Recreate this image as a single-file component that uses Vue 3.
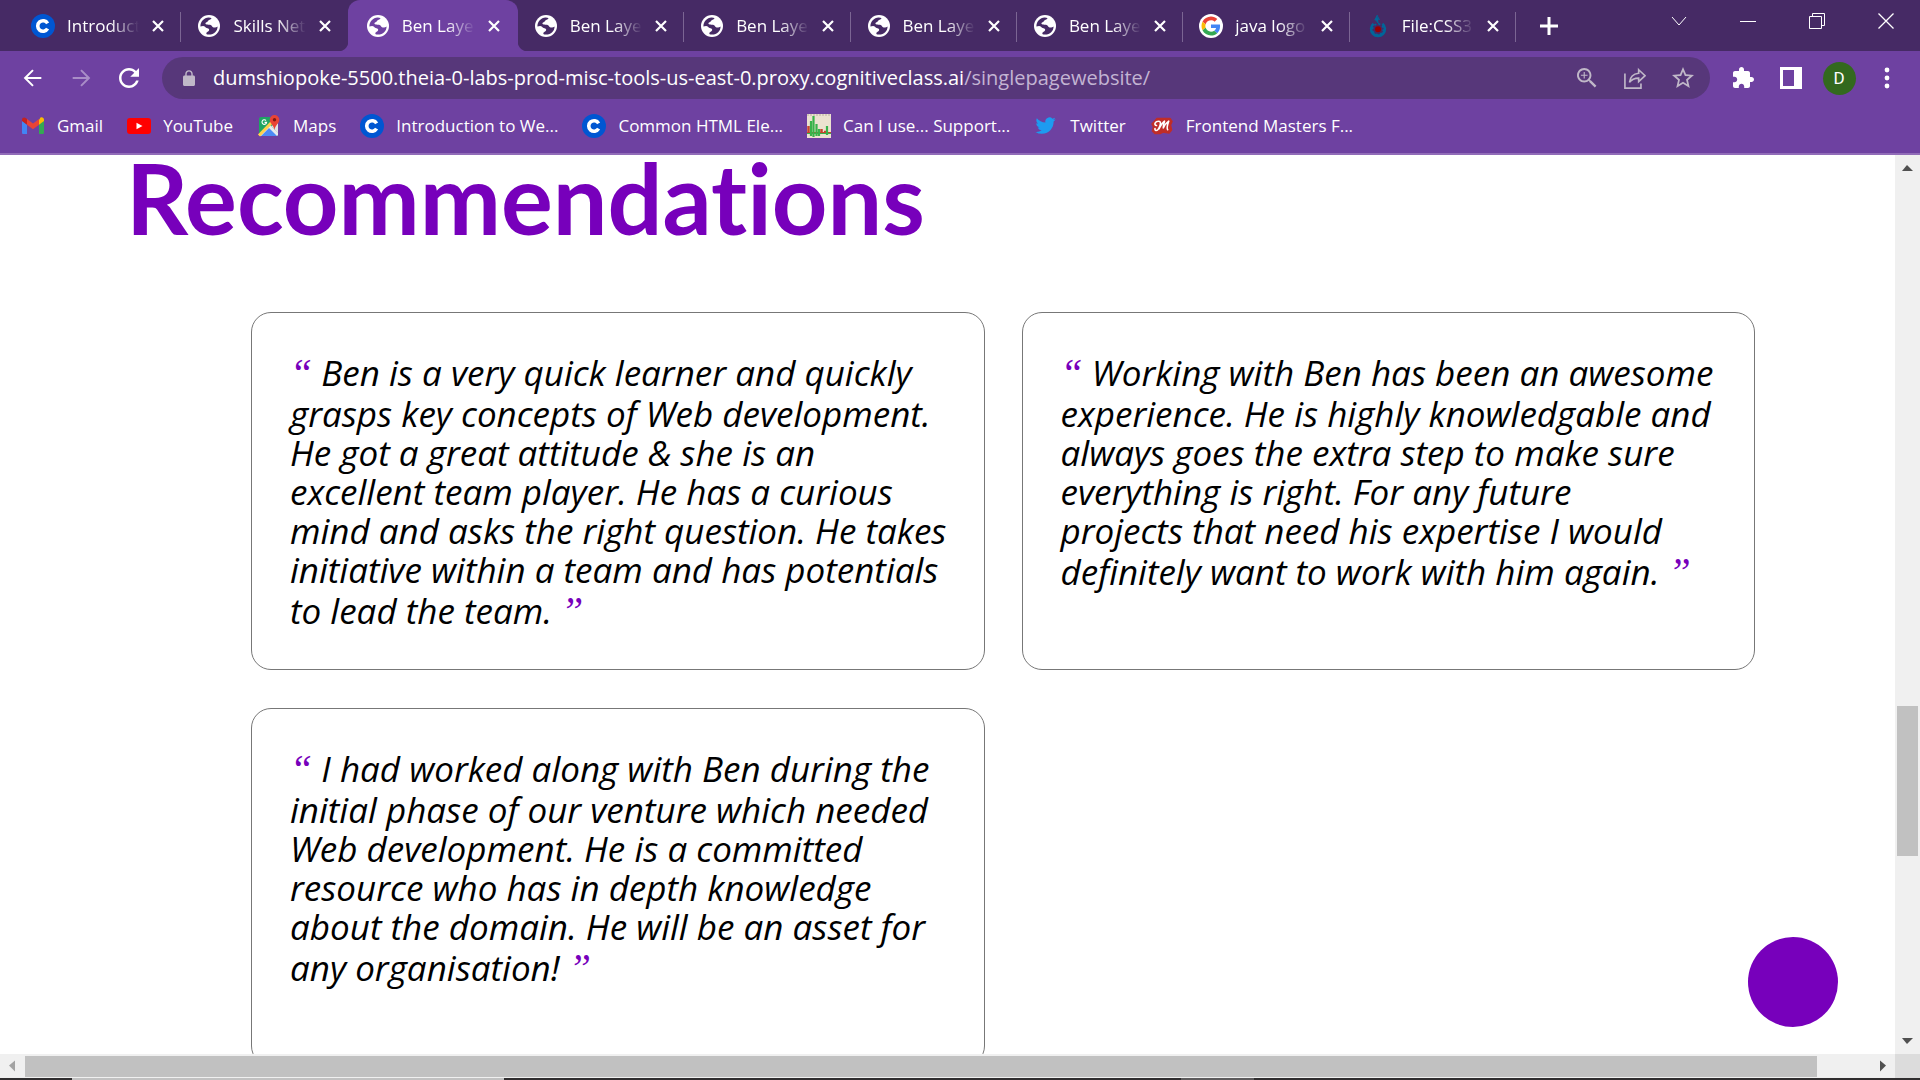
<script setup>
import { ref } from 'vue'

const tabs = [
  { title: 'Introduction', icon: 'coursera' },
  { title: 'Skills Network', icon: 'globe' },
  { title: 'Ben Layer', icon: 'globe', active: true },
  { title: 'Ben Layer', icon: 'globe' },
  { title: 'Ben Layer', icon: 'globe' },
  { title: 'Ben Layer', icon: 'globe' },
  { title: 'Ben Layer', icon: 'globe' },
  { title: 'java logo -', icon: 'google' },
  { title: 'File:CSS3 l', icon: 'commons' },
]

const bookmarks = [
  { label: 'Gmail', icon: 'gmail' },
  { label: 'YouTube', icon: 'youtube' },
  { label: 'Maps', icon: 'maps' },
  { label: 'Introduction to We...', icon: 'coursera' },
  { label: 'Common HTML Ele...', icon: 'coursera' },
  { label: 'Can I use... Support...', icon: 'caniuse' },
  { label: 'Twitter', icon: 'twitter' },
  { label: 'Frontend Masters F...', icon: 'masters' },
]

const windowControls = ['chevron', 'minimize', 'restore', 'close']

const recommendations = ref([
  `Ben is a very quick learner and quickly
grasps key concepts of Web development.
He got a great attitude & she is an
excellent team player. He has a curious
mind and asks the right question. He takes
initiative within a team and has potentials
to lead the team.`,
  `Working with Ben has been an awesome
experience. He is highly knowledgable and
always goes the extra step to make sure
everything is right. For any future
projects that need his expertise I would
definitely want to work with him again.`,
  `I had worked along with Ben during the
initial phase of our venture which needed
Web development. He is a committed
resource who has in depth knowledge
about the domain. He will be an asset for
any organisation!`,
])
</script>

<template>
  <div class="window">
    <svg class="sprite" aria-hidden="true">
      <symbol id="coursera" viewBox="0 0 24 24">
        <circle cx="12" cy="12" r="12" fill="#0056d2" />
        <path d="M16.6 9.3a5.3 5.3 0 1 0 0 5.4" fill="none" stroke="#fff" stroke-width="3.6" />
      </symbol>
      <symbol id="globe" viewBox="0 0 24 24">
        <circle cx="12" cy="12" r="11" fill="#fff" />
        <path class="land" d="M3.4 12.4C3.4 7.6 7 3.7 11.6 3.4C13 3.4 14 3.7 14.6 4.2C13.6 6 11.6 5.6 11 7C10.6 8.2 8.4 8 8.4 9.6C8.4 11 12.4 10.6 13.6 11C15.2 11.6 14.8 13.2 16.6 13.4C18.4 13.6 19.4 13 20.6 12.4C20.6 16.8 17 20.6 12.2 20.6C10.8 20.6 9.8 20.3 9.4 20C9 17.6 12 17.8 12.2 16C12.2 14 9 14.4 8 12.8C7 11.4 5 12 3.4 12.4Z" />
      </symbol>
      <symbol id="google" viewBox="0 0 48 48">
        <circle cx="24" cy="24" r="24" fill="#fff" />
        <g transform="translate(5 5) scale(.79)">
          <path fill="#ea4335" d="M24 9.5c3.54 0 6.71 1.22 9.21 3.6l6.85-6.85C35.9 2.38 30.47 0 24 0 14.62 0 6.51 5.38 2.56 13.22l7.98 6.19C12.43 13.72 17.74 9.5 24 9.5z" />
          <path fill="#4285f4" d="M46.98 24.55c0-1.57-.15-3.09-.38-4.55H24v9.02h12.94c-.58 2.96-2.26 5.48-4.78 7.18l7.73 6c4.51-4.18 7.09-10.36 7.09-17.65z" />
          <path fill="#fbbc05" d="M10.53 28.59c-.48-1.45-.76-2.99-.76-4.59s.27-3.14.76-4.59l-7.98-6.19C.92 16.46 0 20.12 0 24c0 3.88.92 7.54 2.56 10.78l7.97-6.19z" />
          <path fill="#34a853" d="M24 48c6.48 0 11.93-2.13 15.89-5.81l-7.73-6c-2.15 1.45-4.92 2.3-8.16 2.3-6.26 0-11.57-4.22-13.47-9.91l-7.98 6.19C6.51 42.62 14.62 48 24 48z" />
        </g>
      </symbol>
      <symbol id="commons" viewBox="0 0 24 24">
        <path d="M11.4 1L8.8 6h1.9c0 2 1 2.6 2 3.6" fill="#069" stroke="#069" stroke-width="1" />
        <path d="M11.4 1L14 6h-1.6z" fill="#069" />
        <path d="M7.6 9.7a6.9 6.9 0 1 0 8.8 0" fill="none" stroke="#069" stroke-width="2.6" />
        <circle cx="12" cy="15.3" r="5.4" fill="none" stroke="#069" stroke-width="1.6" stroke-dasharray="2 2.2" />
        <circle cx="12" cy="15.3" r="3" fill="#900" />
      </symbol>
      <symbol id="gmail" viewBox="0 0 24 24">
        <path fill="#4285f4" d="M1 6.5v12.2c0 .8.6 1.4 1.4 1.4H6v-9.6z" />
        <path fill="#34a853" d="M18 20.1h3.6c.8 0 1.4-.6 1.4-1.4V6.5l-5 4z" />
        <path fill="#fbbc04" d="M18 6v4.8l5-3.8V5.6c0-2-2.2-3-3.7-1.9z" />
        <path fill="#ea4335" d="M6 10.8V5l6 4.6 6-4.6v5.8l-6 4.5z" />
        <path fill="#c5221f" d="M1 5.6V7l5 3.8V5L4.7 3.9C3.2 2.7 1 3.7 1 5.6z" />
      </symbol>
      <symbol id="youtube" viewBox="0 0 24 24">
        <rect x="0" y="4" width="24" height="16" rx="3" fill="#f00" />
        <path d="M9.5 8.7v6.6l6-3.3z" fill="#fff" />
      </symbol>
      <symbol id="maps" viewBox="0 0 24 24">
        <rect x="2" y="3" width="19" height="19" rx="2" fill="#1fa463" />
        <path d="M2 22L13 11l8 8v1.5a1.5 1.5 0 0 1-1.5 1.5z" fill="#e8eaed" />
        <path d="M4 22l8-8 8 8z" fill="#4c8bf5" />
        <path d="M2 21.5L17 6" stroke="#ffd04b" stroke-width="3" />
        <path d="M14 12l7 7.5V9z" fill="#e0e3e6" />
        <path d="M9 6.5a2.3 2.3 0 1 0 .6 1.9H7.5" fill="none" stroke="#fff" stroke-width="1.1" />
        <path d="M17.5 1a4.8 4.8 0 0 0-4.8 4.8c0 3.6 4 5.2 4.8 10.2.8-5 4.8-6.6 4.8-10.2A4.8 4.8 0 0 0 17.5 1z" fill="#ea4335" />
        <circle cx="17.5" cy="5.8" r="1.7" fill="#7d1a12" />
      </symbol>
      <symbol id="caniuse" viewBox="0 0 24 24">
        <rect width="24" height="24" fill="#ece2d0" />
        <path d="M0 1h24" stroke="#b9b09f" stroke-dasharray="2 1" />
        <path d="M1.5 12v7M14.5 15v4M17 18h2" stroke="#c8432c" stroke-width="2.5" />
        <path d="M0 18.5h24" stroke="#c8432c" />
        <path d="M4 7v15M6.5 2v21M9.5 10v12M12 15v7M20 12v9" stroke="#37b34a" stroke-width="2.2" />
        <path d="M0 19.5h24" stroke="#37b34a" />
      </symbol>
      <symbol id="twitter" viewBox="0 0 24 24">
        <path transform="translate(1.5 1.5) scale(.84)" fill="#1d9bf0" d="M23.953 4.57a10 10 0 01-2.825.775 4.958 4.958 0 002.163-2.723c-.951.555-2.005.959-3.127 1.184a4.92 4.92 0 00-8.384 4.482C7.69 8.095 4.067 6.13 1.64 3.162a4.822 4.822 0 00-.666 2.475c0 1.71.87 3.213 2.188 4.096a4.904 4.904 0 01-2.228-.616v.06a4.923 4.923 0 003.946 4.827 4.996 4.996 0 01-2.212.085 4.936 4.936 0 004.604 3.417 9.867 9.867 0 01-6.102 2.105c-.39 0-.779-.023-1.17-.067a13.995 13.995 0 007.557 2.209c9.053 0 13.998-7.496 13.998-13.985 0-.21 0-.42-.015-.63A9.935 9.935 0 0024 4.59z" />
      </symbol>
      <symbol id="masters" viewBox="0 0 24 24">
        <path d="M7 4.500h13l2 3-1.500 3.500 1 5-2.500 3-6-1-3 1.500H5L2.500 17l1-4-1.500-3z" fill="#c02d28" stroke="#c02d28" stroke-width="1.500" stroke-linejoin="round" />
        <path d="M6.500 11.500C3.500 11 5 7 9 7.200c2.500.3 1.500 4.300-.5 7.600-1.500 2.500-4 2-3.500-.3M9 15c1.500-3 3.500-6.300 5.500-7.800-1 3-1.200 4.800-1.200 6.800 1.200-2.800 3.200-5.500 5.400-6.800-1 3-2.400 7-1 8.500" fill="none" stroke="#fff" stroke-width="1.600" stroke-linecap="round" stroke-linejoin="round" />
      </symbol>
      <symbol id="back" viewBox="0 0 24 24">
        <path d="M22 12H3M12 2.5L2.5 12l9.5 9.5" fill="none" stroke="currentColor" stroke-width="2.4" />
      </symbol>
      <symbol id="forward" viewBox="0 0 24 24">
        <path d="M2 12h19M12 2.5l9.5 9.5-9.5 9.5" fill="none" stroke="currentColor" stroke-width="2.4" />
      </symbol>
      <symbol id="reload" viewBox="4 4 16 16">
        <path fill="currentColor" d="M17.65 6.35C16.2 4.9 14.21 4 12 4c-4.42 0-7.99 3.58-7.99 8s3.57 8 7.99 8c3.73 0 6.84-2.55 7.73-6h-2.08c-.82 2.33-3.04 4-5.65 4-3.31 0-6-2.69-6-6s2.69-6 6-6c1.66 0 3.14.69 4.22 1.78L13 11h7V4l-2.35 2.35z" />
      </symbol>
      <symbol id="lock" viewBox="4 1 16 21">
        <path fill="currentColor" d="M18 8h-1V6c0-2.76-2.24-5-5-5S7 3.24 7 6v2H6c-1.1 0-2 .9-2 2v10c0 1.1.9 2 2 2h12c1.1 0 2-.9 2-2V10c0-1.1-.9-2-2-2zM8.9 8V6c0-1.71 1.39-3.1 3.1-3.1s3.1 1.39 3.1 3.1v2z" />
      </symbol>
      <symbol id="zoom" viewBox="3 3 18 18">
        <path fill="currentColor" d="M15.5 14h-.79l-.28-.27C15.41 12.59 16 11.11 16 9.5 16 5.91 13.09 3 9.5 3S3 5.91 3 9.5 5.91 16 9.5 16c1.61 0 3.09-.59 4.23-1.57l.27.28v.79l5 4.99L20.49 19l-4.99-5zm-6 .3A4.8 4.8 0 1 1 9.5 4.7a4.8 4.8 0 0 1 0 9.6zM12.5 10H10v2.5H9V10H6.5V9H9V6.5h1V9h2.5z" />
      </symbol>
      <symbol id="share" viewBox="0 0 24 24">
        <path d="M1 7v16h17.5v-5" fill="none" stroke="currentColor" stroke-width="1.8" />
        <path d="M16 3l7 6.5-7 6.5v-3.8c-4.5 0-7.5 1-10 4.6.6-5.6 4-9.4 10-10z" fill="none" stroke="currentColor" stroke-width="1.8" />
      </symbol>
      <symbol id="star" viewBox="2 2 20 20">
        <path fill="currentColor" d="M22 9.24l-7.19-.62L12 2 9.19 8.63 2 9.24l5.46 4.73L5.82 21 12 17.27 18.18 21l-1.63-7.03L22 9.24zM12 15.4l-3.76 2.27 1-4.28-3.32-2.88 4.38-.38L12 6.1l1.71 4.04 4.38.38-3.32 2.88 1 4.28L12 15.4z" />
      </symbol>
      <symbol id="extension" viewBox="1 1 22 22">
        <path fill="currentColor" d="M20.5 11H19V7c0-1.1-.9-2-2-2h-4V3.5C13 2.12 11.88 1 10.5 1S8 2.12 8 3.5V5H4c-1.1 0-1.99.9-1.99 2v3.8H3.5c1.49 0 2.7 1.21 2.7 2.7s-1.21 2.7-2.7 2.7H2V20c0 1.1.9 2 2 2h3.8v-1.5c0-1.49 1.21-2.7 2.7-2.7 1.49 0 2.7 1.21 2.7 2.7V22H17c1.1 0 2-.9 2-2v-4h1.5c1.38 0 2.5-1.12 2.5-2.5S21.88 11 20.5 11z" />
      </symbol>
      <symbol id="panel" viewBox="0 0 22 22">
        <path fill="currentColor" fill-rule="evenodd" d="M0 0h22v22H0zM3 3v16h11V3z" />
      </symbol>
      <symbol id="dots" viewBox="0 0 22 22">
        <g fill="currentColor"><circle cx="11" cy="3" r="2.4" /><circle cx="11" cy="11" r="2.4" /><circle cx="11" cy="19" r="2.4" /></g>
      </symbol>
      <symbol id="x" viewBox="0 0 12 12">
        <path d="M1 1l10 10M11 1L1 11" stroke="currentColor" stroke-width="2.2" />
      </symbol>
      <symbol id="plus" viewBox="0 0 18 18">
        <path d="M9 0v18M0 9h18" stroke="currentColor" stroke-width="3" />
      </symbol>
      <symbol id="chevron" viewBox="0 0 16 16">
        <path d="M1 4l7 8 7-8" fill="none" stroke="currentColor" />
      </symbol>
      <symbol id="minimize" viewBox="0 0 16 16">
        <path d="M0 8.5h16" stroke="currentColor" />
      </symbol>
      <symbol id="restore" viewBox="0 0 16 16">
        <path d="M.5 3.5h12v12H.5zM3.5 3.5V.5h12v12h-3" fill="none" stroke="currentColor" />
      </symbol>
      <symbol id="close" viewBox="0 0 16 16">
        <path d="M.5.5l15 15M15.5.5l-15 15" stroke="currentColor" stroke-width="1.3" />
      </symbol>
    </svg>

    <header class="chrome">
      <div class="tab-strip">
        <ul class="tabs">
          <li v-for="(tab, i) in tabs" :key="i" class="tab" :class="{ active: tab.active, divided: i !== 1 && !tab.active }">
            <svg class="favicon"><use :href="'#' + tab.icon" /></svg>
            <span class="tab-title">{{ tab.title }}</span>
            <button class="icon-button tab-close" aria-label="Close tab"><svg><use href="#x" /></svg></button>
          </li>
        </ul>
        <button class="icon-button new-tab" aria-label="New tab"><svg><use href="#plus" /></svg></button>
        <div class="window-controls">
          <button v-for="name in windowControls" :key="name" class="icon-button control" :aria-label="name">
            <svg><use :href="'#' + name" /></svg>
          </button>
        </div>
      </div>

      <div class="toolbar">
        <nav class="history">
          <button class="icon-button tool" aria-label="Back"><svg><use href="#back" /></svg></button>
          <button class="icon-button tool" aria-label="Forward" disabled><svg><use href="#forward" /></svg></button>
          <button class="icon-button tool" aria-label="Reload"><svg><use href="#reload" /></svg></button>
        </nav>
        <div class="omnibox">
          <svg class="lock"><use href="#lock" /></svg>
          <span class="url">dumshiopoke-5500.theia-0-labs-prod-misc-tools-us-east-0.proxy.cognitiveclass.ai<span class="path">/singlepagewebsite/</span></span>
          <button class="icon-button tool" aria-label="Zoom"><svg><use href="#zoom" /></svg></button>
          <button class="icon-button tool" aria-label="Share"><svg class="large"><use href="#share" /></svg></button>
          <button class="icon-button tool" aria-label="Bookmark this page"><svg class="large"><use href="#star" /></svg></button>
        </div>
        <div class="actions">
          <button class="icon-button tool" aria-label="Extensions"><svg class="large"><use href="#extension" /></svg></button>
          <button class="icon-button tool" aria-label="Side panel"><svg class="large"><use href="#panel" /></svg></button>
          <button class="icon-button tool" aria-label="Profile"><span class="avatar">D</span></button>
          <button class="icon-button tool" aria-label="Menu"><svg class="large"><use href="#dots" /></svg></button>
        </div>
      </div>

      <nav class="bookmarks">
        <a v-for="item in bookmarks" :key="item.label" class="bookmark" href="#">
          <svg class="favicon"><use :href="'#' + item.icon" /></svg>
          <span>{{ item.label }}</span>
        </a>
      </nav>
    </header>

    <div class="viewport">
      <main class="page">
        <h1>Recommendations</h1>
        <div class="cards">
          <blockquote v-for="(text, i) in recommendations" :key="i" class="card"><span class="quote">“</span> {{ text }} <span class="quote">”</span></blockquote>
        </div>
        <a class="to-top" href="#" aria-label="Back to top"></a>
      </main>
      <div class="scrollbar vertical">
        <span class="arrow up"></span>
        <div class="track"><div class="thumb"></div></div>
        <span class="arrow down"></span>
      </div>
    </div>

    <div class="scroll-row">
      <div class="scrollbar horizontal">
        <span class="arrow left"></span>
        <div class="track"><div class="thumb"></div></div>
        <span class="arrow right"></span>
      </div>
      <div class="corner"></div>
    </div>
    <div class="taskbar"><span class="lit"></span><span class="dim"></span></div>
  </div>
</template>

<style>
body {
  margin: 0;
}
</style>

<style scoped>
.window {
  display: flex;
  flex-direction: column;
  height: 100vh;
  overflow: hidden;
  background: #fff;
  font-family: "Open Sans", "Noto Sans", sans-serif;
}
.sprite {
  position: absolute;
  width: 0;
  height: 0;
}
.land {
  fill: var(--bar);
}
.chrome {
  --bar: #462a65;
  flex: none;
  color: #fff;
  background: #6e41a1;
  border-bottom: 2px solid #916cb8;
}
.icon-button {
  display: flex;
  flex: none;
  align-items: center;
  justify-content: center;
  padding: 0;
  border: 0;
  background: none;
  color: inherit;
}
.favicon {
  flex: none;
  width: 24px;
  height: 24px;
}

.tab-strip {
  display: flex;
  height: 51px;
  background: var(--bar);
}
.tabs {
  display: flex;
  flex: 1;
  min-width: 0;
  margin: 0;
  padding: 0 0 0 15px;
  list-style: none;
}
.tab {
  position: relative;
  display: flex;
  flex: 1 1 0;
  align-items: center;
  box-sizing: border-box;
  min-width: 0;
  padding: 0 17px 0 16px;
}
.tab.divided::after {
  content: "";
  position: absolute;
  top: 12px;
  right: 0;
  width: 1px;
  height: 30px;
  background: #7b6593;
}
.tab.active {
  --bar: #6e41a1;
  flex: 0 0 170px;
  padding: 0 18px;
  background: var(--bar);
  border-radius: 12px 12px 0 0;
}
.tab.active::before,
.tab.active::after {
  content: "";
  position: absolute;
  bottom: 0;
  width: 10px;
  height: 10px;
}
.tab.active::before {
  right: 100%;
  background: radial-gradient(circle at 0 0, transparent 10px, #6e41a1 11px);
}
.tab.active::after {
  left: 100%;
  background: radial-gradient(circle at 100% 0, transparent 10px, #6e41a1 11px);
}
.tab-title {
  flex: 1;
  min-width: 0;
  margin: 0 13px 0 12px;
  overflow: hidden;
  font-size: 17px;
  line-height: 24px;
  white-space: nowrap;
  mask-image: linear-gradient(to right, #000 60%, transparent);
}
.tab-close svg {
  width: 12px;
  height: 12px;
}
.new-tab {
  width: 66px;
}
.new-tab svg {
  width: 18px;
  height: 18px;
}
.window-controls {
  display: flex;
  padding-left: 62px;
}
.control {
  width: 69px;
  height: 42px;
}
.control svg {
  width: 16px;
  height: 16px;
}

.toolbar {
  display: flex;
  align-items: center;
  height: 54px;
  padding: 0 9px;
}
.history,
.actions {
  display: flex;
}
.history {
  padding-right: 9px;
}
.actions {
  padding-left: 9px;
}
.tool {
  width: 48px;
  height: 42px;
}
.tool svg {
  width: 20px;
  height: 20px;
}
.tool svg.large {
  width: 22px;
  height: 22px;
}
.tool:disabled {
  color: #a98dc7;
}
.omnibox {
  display: flex;
  flex: 1;
  align-items: center;
  height: 42px;
  padding: 0 3px 0 21px;
  border-radius: 21px;
  background: #57377a;
  color: #c0b8c8;
}
.lock {
  flex: none;
  width: 12px;
  height: 18px;
}
.url {
  flex: 1;
  min-width: 0;
  margin-left: 18px;
  overflow: hidden;
  color: #fff;
  font-size: 20px;
  line-height: 28px;
  white-space: nowrap;
}
.path {
  color: #c3b4d3;
}
.avatar {
  width: 33px;
  height: 33px;
  border-radius: 50%;
  background: #33691e;
  font-family: Roboto, sans-serif;
  font-size: 17px;
  line-height: 33px;
}

.bookmarks {
  display: flex;
  gap: 24px;
  height: 42px;
  padding: 0 21px 6px;
}
.bookmark {
  display: flex;
  gap: 12px;
  align-items: center;
  color: #fff;
  font-size: 17px;
  line-height: 24px;
  text-decoration: none;
  white-space: nowrap;
}

.viewport {
  display: flex;
  flex: 1;
  min-height: 0;
}
.page {
  position: relative;
  flex: 1;
  min-width: 0;
  overflow: hidden;
}
h1 {
  margin: 0 0 71px 126px;
  color: #7700bb;
  font-family: Lato, "Open Sans", sans-serif;
  font-size: 97px;
  font-variant-ligatures: none;
  font-weight: 700;
  line-height: 86px;
}
.cards {
  display: grid;
  grid-template-columns: 1fr 1fr;
  gap: 38px 37px;
  margin: 0 140px 0 251px;
}
.card {
  box-sizing: border-box;
  min-height: 358px;
  margin: 0;
  padding: 38px 0 36px 38px;
  border: 1px solid #777;
  border-radius: 20px;
  color: #000;
  font-size: 35px;
  font-style: italic;
  line-height: 39px;
  white-space: pre;
}
.quote {
  color: #7700bb;
  font-family: "Liberation Serif", serif;
  font-size: 40px;
  line-height: 43px;
}
.to-top {
  position: absolute;
  right: 57px;
  bottom: 27px;
  width: 90px;
  height: 90px;
  border-radius: 50%;
  background: #7700bb;
}

.scrollbar {
  display: flex;
  background: #f0f0f0;
}
.scrollbar.vertical {
  flex: none;
  flex-direction: column;
  align-items: center;
  width: 25px;
}
.scroll-row {
  display: flex;
  flex: none;
  height: 24px;
}
.scrollbar.horizontal {
  flex: 1;
  align-items: center;
}
.track {
  flex: 1;
}
.vertical .track {
  display: flex;
  flex-direction: column;
  width: 21px;
}
.vertical .track::before {
  content: "";
  flex: 526 0 0;
}
.vertical .thumb {
  flex: 150 0 0;
}
.vertical .track::after {
  content: "";
  flex: 173 0 0;
}
.horizontal .track {
  height: 21px;
  padding-right: 53px;
}
.horizontal .thumb {
  height: 100%;
}
.thumb {
  background: #c1c1c1;
}
.arrow {
  flex: none;
  width: 25px;
  height: 25px;
  background: #505050;
}
.up {
  clip-path: polygon(7px 16px, 18px 16px, 12px 10px);
}
.down {
  clip-path: polygon(7px 9px, 18px 9px, 12px 15px);
}
.left {
  background: #a3a3a3;
  clip-path: polygon(15px 7px, 15px 18px, 9px 12px);
}
.right {
  clip-path: polygon(10px 7px, 10px 18px, 16px 12px);
}
.corner {
  width: 25px;
  background: #dcdcdc;
}
.taskbar {
  display: flex;
  flex: none;
  height: 2px;
  padding-left: 72px;
  background: #302e2f;
}
.lit {
  width: 432px;
  background: #c1c1c1;
}
.dim {
  width: 73px;
  margin-left: 677px;
  background: #5d5b5c;
}
</style>
